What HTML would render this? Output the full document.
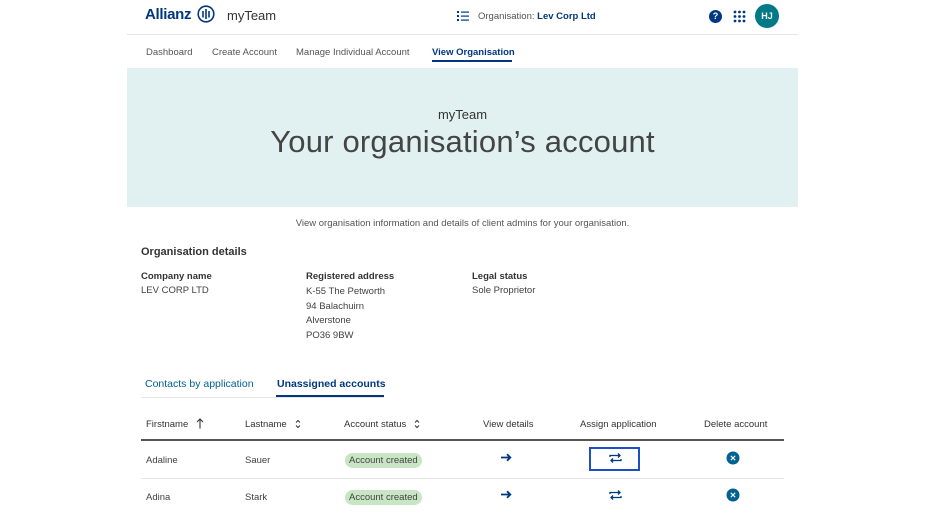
<!DOCTYPE html>
<html><head><meta charset="utf-8"><style>
*{margin:0;padding:0;box-sizing:border-box}
body{width:928px;height:516px;background:#fff;font-family:"Liberation Sans",sans-serif;color:#414141;position:relative;overflow:hidden}
.a{position:absolute;white-space:nowrap}
.s{font-size:9.5px}
.b{font-weight:bold}
</style></head><body>
<div class="a b" style="left:145px;top:6px;font-size:15px;color:#003781;letter-spacing:-0.3px">Allianz</div>
<svg class="a" style="left:197px;top:5px" width="18" height="18" viewBox="0 0 18 18"><circle cx="9" cy="9" r="7.8" fill="none" stroke="#003781" stroke-width="1.6"/><rect x="5.2" y="6" width="1.6" height="6.5" fill="#003781"/><rect x="8.2" y="4" width="1.6" height="10" fill="#003781"/><rect x="11.2" y="6" width="1.6" height="6.5" fill="#003781"/></svg>
<div class="a" style="left:227px;top:8px;font-size:13px;color:#333">myTeam</div>
<svg class="a" style="left:457px;top:11px" width="12" height="10"><g fill="#003781"><rect x="0" y="0" width="2" height="2"/><rect x="0" y="4" width="2" height="2"/><rect x="0" y="8" width="2" height="2"/><rect x="4" y="0.5" width="8" height="1.2"/><rect x="4" y="4.5" width="8" height="1.2"/><rect x="4" y="8.5" width="8" height="1.2"/></g></svg>
<div class="a s" style="left:478px;top:11px;color:#555">Organisation: <span class="b" style="color:#003781">Lev Corp Ltd</span></div>
<div class="a b" style="left:709px;top:10px;width:13px;height:13px;border-radius:50%;background:#003781;color:#fff;font-size:9px;text-align:center;line-height:13px">?</div>
<svg class="a" style="left:733px;top:10px" width="13" height="13"><g fill="#003781"><circle cx="2" cy="2" r="1.4"/><circle cx="6.5" cy="2" r="1.4"/><circle cx="11" cy="2" r="1.4"/><circle cx="2" cy="6.5" r="1.4"/><circle cx="6.5" cy="6.5" r="1.4"/><circle cx="11" cy="6.5" r="1.4"/><circle cx="2" cy="11" r="1.4"/><circle cx="6.5" cy="11" r="1.4"/><circle cx="11" cy="11" r="1.4"/></g></svg>
<div class="a b" style="left:755px;top:4px;width:24px;height:24px;border-radius:50%;background:#007a87;color:#fff;font-size:9px;text-align:center;line-height:24px">HJ</div>
<div class="a" style="left:127px;top:34px;width:671px;height:1px;background:#e6e6e6"></div>
<div class="a s" style="left:146px;top:47px;color:#555">Dashboard</div>
<div class="a s" style="left:212px;top:47px;color:#555">Create Account</div>
<div class="a s" style="left:296px;top:47px;color:#555">Manage Individual Account</div>
<div class="a s b" style="left:432px;top:47px;color:#003781">View Organisation</div>
<div class="a" style="left:432px;top:60px;width:80px;height:2px;background:#003781"></div>
<div class="a" style="left:127px;top:68px;width:671px;height:139px;background:#e1f1f1"></div>
<div class="a" style="left:127px;top:107px;width:671px;text-align:center;font-size:13px;color:#333">myTeam</div>
<div class="a" style="left:127px;top:124px;width:671px;text-align:center;font-size:31px;color:#444;letter-spacing:0.2px">Your organisation’s account</div>
<div class="a s" style="left:127px;top:218px;width:671px;text-align:center;color:#555">View organisation information and details of client admins for your organisation.</div>
<div class="a b" style="left:141px;top:246px;font-size:11px;color:#333">Organisation details</div>
<div class="a s b" style="left:141px;top:271px;color:#333">Company name</div>
<div class="a s" style="left:141px;top:285px">LEV CORP LTD</div>
<div class="a s b" style="left:306px;top:271px;color:#333">Registered address</div>
<div class="a s" style="left:306px;top:285px;line-height:14.5px">K-55 The Petworth<br>94 Balachuirn<br>Alverstone<br>PO36 9BW</div>
<div class="a s b" style="left:472px;top:271px;color:#333">Legal status</div>
<div class="a s" style="left:472px;top:285px">Sole Proprietor</div>
<div class="a" style="left:145px;top:378px;font-size:10.5px;color:#006192">Contacts by application</div>
<div class="a b" style="left:277px;top:378px;font-size:10.5px;color:#003781">Unassigned accounts</div>
<div class="a" style="left:141px;top:397px;width:243px;height:1px;background:#e6e6e6"></div>
<div class="a" style="left:276px;top:395px;width:108px;height:2px;background:#003781"></div>
<div class="a s" style="left:146px;top:419px;color:#333">Firstname</div>
<svg class="a" style="left:196px;top:418px" width="8" height="11"><path d="M4 10.5V1M1 4l3-3 3 3" fill="none" stroke="#333" stroke-width="1.1"/></svg>
<div class="a s" style="left:245px;top:419px;color:#333">Lastname</div>
<svg class="a" style="left:295px;top:419px" width="6" height="10"><path d="M1 3.5l2-2 2 2M1 6.5l2 2 2-2" fill="none" stroke="#333" stroke-width="1"/></svg>
<div class="a s" style="left:344px;top:419px;color:#333">Account status</div>
<svg class="a" style="left:414px;top:419px" width="6" height="10"><path d="M1 3.5l2-2 2 2M1 6.5l2 2 2-2" fill="none" stroke="#333" stroke-width="1"/></svg>
<div class="a s" style="left:483px;top:419px;color:#333">View details</div>
<div class="a s" style="left:580px;top:419px;color:#333">Assign application</div>
<div class="a s" style="left:704px;top:419px;color:#333">Delete account</div>
<div class="a" style="left:141px;top:439px;width:643px;height:2px;background:#555"></div>
<div class="a" style="left:141px;top:478px;width:643px;height:1px;background:#e6e6e6"></div>
<div class="a s" style="left:146px;top:455px">Adaline</div>
<div class="a s" style="left:245px;top:455px">Sauer</div>
<div class="a s" style="left:146px;top:492px">Adina</div>
<div class="a s" style="left:245px;top:492px">Stark</div>
<div class="a s" style="left:345px;top:453px;background:#c8e6c3;border-radius:8px;padding:2px 4px;color:#444">Account created</div>
<div class="a s" style="left:345px;top:490px;background:#c8e6c3;border-radius:8px;padding:2px 4px;color:#444">Account created</div>
<svg class="a" style="left:501px;top:453px" width="11" height="9"><path d="M0 4.5h9M6 1.2l3.3 3.3L6 7.8" fill="none" stroke="#003781" stroke-width="1.8"/></svg>
<svg class="a" style="left:501px;top:490px" width="11" height="9"><path d="M0 4.5h9M6 1.2l3.3 3.3L6 7.8" fill="none" stroke="#003781" stroke-width="1.8"/></svg>
<div class="a" style="left:589px;top:447px;width:51px;height:24px;border:2px solid #1f4fc4"></div>
<svg class="a" style="left:609px;top:452px" width="13" height="12" viewBox="0 0 13 12"><path d="M1 5V3.5h10M9 1.5l2 2-2 2M12 7v1.5H2M4 6.5l-2 2 2 2" fill="none" stroke="#003781" stroke-width="1.3"/></svg>
<svg class="a" style="left:609px;top:489px" width="13" height="12" viewBox="0 0 13 12"><path d="M1 5V3.5h10M9 1.5l2 2-2 2M12 7v1.5H2M4 6.5l-2 2 2 2" fill="none" stroke="#003781" stroke-width="1.3"/></svg>
<svg class="a" style="left:726px;top:451px" width="14" height="14"><circle cx="7" cy="7" r="6.5" fill="#006192"/><path d="M4.8 4.8l4.4 4.4M9.2 4.8l-4.4 4.4" stroke="#fff" stroke-width="1.1"/></svg>
<svg class="a" style="left:726px;top:488px" width="14" height="14"><circle cx="7" cy="7" r="6.5" fill="#006192"/><path d="M4.8 4.8l4.4 4.4M9.2 4.8l-4.4 4.4" stroke="#fff" stroke-width="1.1"/></svg>
</body></html>
